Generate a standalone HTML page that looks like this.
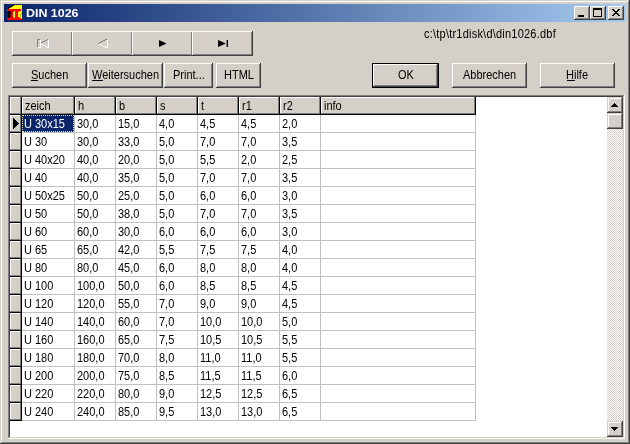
<!DOCTYPE html><html><head><meta charset="utf-8"><title>DIN 1026</title><style>
html,body{margin:0;padding:0;}
body{width:630px;height:444px;overflow:hidden;background:#d4d0c8;position:relative;font-family:"Liberation Sans",sans-serif;font-size:11px;color:#000;}
.a{position:absolute;}
.win{left:0;top:0;width:630px;height:444px;background:#d4d0c8;
 box-shadow:inset -1px -1px 0 #404040,inset 1px 1px 0 #d4d0c8,inset -2px -2px 0 #808080,inset 2px 2px 0 #fff;}
.title{left:4px;top:4px;width:622px;height:18px;background:linear-gradient(to right,#0a246a 0%,#a6caf0 100%);}
.ttext{left:26px;top:4px;height:18px;line-height:18px;color:#fff;font-weight:bold;font-size:11px;white-space:nowrap;transform-origin:0 0;transform:scaleX(1.13);will-change:transform;}
.btn{background:#d4d0c8;box-shadow:inset -1px -1px 0 #404040,inset 1px 1px 0 #fff,inset -2px -2px 0 #808080,inset 2px 2px 0 #d4d0c8;}
.sb{box-shadow:inset -1px -1px 0 #404040,inset 1px 1px 0 #d4d0c8,inset -2px -2px 0 #808080,inset 2px 2px 0 #fff;}
.bt{position:absolute;left:0;right:0;top:0;bottom:0;text-align:center;white-space:nowrap;}
.tx{display:inline-block;transform-origin:0 0;transform:scaleY(1.14);will-change:transform;white-space:nowrap;line-height:13px;}
.cap{width:16px;height:14px;top:6px;}
.grid{left:8px;top:95px;width:617px;height:344px;background:#fff;
 box-shadow:inset -1px -1px 0 #fff,inset 1px 1px 0 #808080,inset -2px -2px 0 #d4d0c8,inset 2px 2px 0 #404040;}
.hc{background:#d4d0c8;box-shadow:inset -1px -1px 0 #808080,inset 1px 1px 0 #fff;}
.bl{background:#000;}
.gl{background:#c0c0c0;}
.ct{white-space:nowrap;}
u{text-decoration:none;}
.track{background-image:repeating-conic-gradient(#fff 0 25%,#d4d0c8 0 50%);background-size:2px 2px;}
</style></head><body>
<div class="a win"></div>
<div class="a title"></div>
<svg class="a" style="left:0;top:0" width="30" height="24" viewBox="0 0 30 24" shape-rendering="crispEdges">
<polygon points="14,5 22,5 22,20 8,20 8,9" fill="#ffff00"/>
<path d="M8 8.5L14.5 4.5" stroke="#000" stroke-width="1.2" shape-rendering="auto" fill="none"/>
<path d="M21.5 12.5L19.5 18" stroke="#a0a020" stroke-width="1" shape-rendering="auto" fill="none"/>
<rect x="8" y="11" width="2" height="7" fill="#000"/>
<rect x="10" y="11" width="1" height="7" fill="#500000"/>
<rect x="15" y="11" width="1" height="7" fill="#705000"/>
<rect x="7" y="9" width="14" height="2" fill="#ff0000"/>
<rect x="7" y="18" width="14" height="2" fill="#ff0000"/>
<rect x="11" y="11" width="2" height="7" fill="#ff0000"/>
<rect x="16" y="11" width="2" height="7" fill="#ff0000"/>
<rect x="13" y="11" width="1" height="1" fill="#ff0000"/><rect x="13" y="17" width="1" height="1" fill="#ff0000"/>
<rect x="18" y="11" width="1" height="1" fill="#ff0000"/><rect x="18" y="17" width="1" height="1" fill="#ff0000"/>
<rect x="10" y="17" width="1" height="1" fill="#ff0000"/><rect x="15" y="17" width="1" height="1" fill="#ff0000"/>
<rect x="21" y="19" width="1" height="1" fill="#303000"/>
</svg>
<div class="a ttext">DIN 1026</div>
<div class="a btn cap" style="left:574px"><div class="a" style="left:4px;top:9px;width:6px;height:2px;background:#000"></div></div>
<div class="a btn cap" style="left:590px"><div class="a" style="left:3px;top:2px;width:9px;height:9px;box-sizing:border-box;border:1px solid #000;border-top-width:2px"></div></div>
<div class="a btn cap" style="left:608px"><svg class="a" style="left:4px;top:3px" width="8" height="7" viewBox="0 0 8 7" shape-rendering="crispEdges"><path d="M0 0h2v1h1v1h2v-1h1v-1h2v1h-1v1h-1v1h-1v1h1v1h1v1h1v1h-2v-1h-1v-1h-2v1h-1v1h-2v-1h1v-1h1v-1h1v-1h-1v-1h-1v-1h-1z" fill="#000"/></svg></div>
<div class="a btn" style="left:12px;top:31px;width:61px;height:25px"></div>
<div class="a btn" style="left:72px;top:31px;width:61px;height:25px"></div>
<div class="a btn" style="left:132px;top:31px;width:61px;height:25px"></div>
<div class="a btn" style="left:192px;top:31px;width:61px;height:25px"></div>
<svg class="a" style="left:36px;top:38px" width="14" height="11" viewBox="0 0 14 11" shape-rendering="crispEdges">
<path d="M1 1h3v1h-2v7h-1z" fill="#808080"/>
<path d="M4 2h1v8h-3v-1h2z" fill="#fff"/>
<path d="M5 4h2v1h-2zM7 3h2v1h-2zM9 2h2v1h-2zM11 1h1v1h-1z" fill="#808080"/>
<path d="M5 6h2v1h-2zM7 7h2v1h-2zM9 8h2v1h-2zM11 9h2v1h-2zM12 2h1v8h-1z" fill="#fff"/>
</svg>
<svg class="a" style="left:96px;top:38px" width="14" height="11" viewBox="0 0 14 11" shape-rendering="crispEdges">
<path d="M2 5h1v1h-1zM3 4h2v1h-2zM5 3h2v1h-2zM7 2h2v1h-2zM9 1h2v1h-2z" fill="#808080"/>
<path d="M3 6h2v1h-2zM5 7h2v1h-2zM7 8h2v1h-2zM9 9h2v1h-2zM11 2h1v8h-1z" fill="#fff"/>
</svg>
<svg class="a" style="left:159px;top:40px" width="8" height="7" viewBox="0 0 8 7">
<path d="M0 0L7.6 3.5L0 7z" fill="#000"/></svg>
<svg class="a" style="left:218px;top:40px" width="10" height="7" viewBox="0 0 10 7">
<path d="M0 0L7.8 3.5L0 7z" fill="#000"/><rect x="8.6" y="0" width="1.4" height="7" fill="#000"/></svg>
<div class="a ct" style="left:424px;top:27px;letter-spacing:0.22px"><span class="tx">c:\tp\tr1disk\d\din1026.dbf</span></div>
<div class="a btn" style="left:12px;top:63px;width:75px;height:25px"><div class="bt" style="top:5px"><span class="tx"><u>S</u>uchen</span></div></div>
<div class="a btn" style="left:88px;top:63px;width:75px;height:25px"><div class="bt" style="top:5px"><span class="tx"><u>W</u>eitersuchen</span></div></div>
<div class="a btn" style="left:164px;top:63px;width:49px;height:25px"><div class="bt" style="top:5px"><span class="tx">Print...</span></div></div>
<div class="a btn" style="left:216px;top:63px;width:45px;height:25px"><div class="bt" style="top:5px"><span class="tx">HTML</span></div></div>
<div class="a" style="left:372px;top:63px;width:67px;height:25px;background:#000"></div>
<div class="a btn" style="left:373px;top:64px;width:65px;height:23px"><div class="bt" style="top:4px"><span class="tx">OK</span></div></div>
<div class="a btn" style="left:452px;top:63px;width:75px;height:25px"><div class="bt" style="top:5px"><span class="tx">Abbrechen</span></div></div>
<div class="a btn" style="left:540px;top:63px;width:75px;height:25px"><div class="bt" style="top:5px"><span class="tx"><u>H</u>ilfe</span></div></div>
<div class="a bl" style="left:31px;top:80px;width:7px;height:1px"></div>
<div class="a bl" style="left:92px;top:80px;width:11px;height:1px"></div>
<div class="a bl" style="left:567px;top:80px;width:8px;height:1px"></div>
<div class="a grid"></div>
<div class="a hc" style="left:10px;top:97px;width:11px;height:17px"></div>
<div class="a bl" style="left:21px;top:97px;width:1px;height:324px"></div>
<div class="a bl" style="left:10px;top:114px;width:466px;height:1px"></div>
<div class="a hc" style="left:22px;top:97px;width:52px;height:17px"><div class="a ct" style="left:2.5px;top:2px"><span class="tx">zeich</span></div></div>
<div class="a bl" style="left:74px;top:97px;width:1px;height:17px"></div>
<div class="a gl" style="left:74px;top:115px;width:1px;height:306px"></div>
<div class="a hc" style="left:75px;top:97px;width:40px;height:17px"><div class="a ct" style="left:2.5px;top:2px"><span class="tx">h</span></div></div>
<div class="a bl" style="left:115px;top:97px;width:1px;height:17px"></div>
<div class="a gl" style="left:115px;top:115px;width:1px;height:306px"></div>
<div class="a hc" style="left:116px;top:97px;width:40px;height:17px"><div class="a ct" style="left:2.5px;top:2px"><span class="tx">b</span></div></div>
<div class="a bl" style="left:156px;top:97px;width:1px;height:17px"></div>
<div class="a gl" style="left:156px;top:115px;width:1px;height:306px"></div>
<div class="a hc" style="left:157px;top:97px;width:40px;height:17px"><div class="a ct" style="left:2.5px;top:2px"><span class="tx">s</span></div></div>
<div class="a bl" style="left:197px;top:97px;width:1px;height:17px"></div>
<div class="a gl" style="left:197px;top:115px;width:1px;height:306px"></div>
<div class="a hc" style="left:198px;top:97px;width:40px;height:17px"><div class="a ct" style="left:2.5px;top:2px"><span class="tx">t</span></div></div>
<div class="a bl" style="left:238px;top:97px;width:1px;height:17px"></div>
<div class="a gl" style="left:238px;top:115px;width:1px;height:306px"></div>
<div class="a hc" style="left:239px;top:97px;width:40px;height:17px"><div class="a ct" style="left:2.5px;top:2px"><span class="tx">r1</span></div></div>
<div class="a bl" style="left:279px;top:97px;width:1px;height:17px"></div>
<div class="a gl" style="left:279px;top:115px;width:1px;height:306px"></div>
<div class="a hc" style="left:280px;top:97px;width:40px;height:17px"><div class="a ct" style="left:2.5px;top:2px"><span class="tx">r2</span></div></div>
<div class="a bl" style="left:320px;top:97px;width:1px;height:17px"></div>
<div class="a gl" style="left:320px;top:115px;width:1px;height:306px"></div>
<div class="a hc" style="left:321px;top:97px;width:154px;height:17px"><div class="a ct" style="left:2.5px;top:2px"><span class="tx">info</span></div></div>
<div class="a bl" style="left:475px;top:97px;width:1px;height:17px"></div>
<div class="a gl" style="left:475px;top:115px;width:1px;height:306px"></div>
<div class="a hc" style="left:10px;top:115px;width:11px;height:17px"></div>
<div class="a bl" style="left:10px;top:132px;width:12px;height:1px"></div>
<div class="a gl" style="left:22px;top:132px;width:454px;height:1px"></div>
<div class="a" style="left:22px;top:115px;width:52px;height:17px;background:#0a246a;box-sizing:border-box;border:1px dotted #f5db95"></div>
<div class="a ct" style="left:24px;top:117px;color:#fff"><span class="tx">U 30x15</span></div>
<div class="a ct" style="left:77px;top:117px"><span class="tx">30,0</span></div>
<div class="a ct" style="left:118px;top:117px"><span class="tx">15,0</span></div>
<div class="a ct" style="left:159px;top:117px"><span class="tx">4,0</span></div>
<div class="a ct" style="left:200px;top:117px"><span class="tx">4,5</span></div>
<div class="a ct" style="left:241px;top:117px"><span class="tx">4,5</span></div>
<div class="a ct" style="left:282px;top:117px"><span class="tx">2,0</span></div>
<div class="a hc" style="left:10px;top:133px;width:11px;height:17px"></div>
<div class="a bl" style="left:10px;top:150px;width:12px;height:1px"></div>
<div class="a gl" style="left:22px;top:150px;width:454px;height:1px"></div>
<div class="a ct" style="left:24px;top:135px"><span class="tx">U 30</span></div>
<div class="a ct" style="left:77px;top:135px"><span class="tx">30,0</span></div>
<div class="a ct" style="left:118px;top:135px"><span class="tx">33,0</span></div>
<div class="a ct" style="left:159px;top:135px"><span class="tx">5,0</span></div>
<div class="a ct" style="left:200px;top:135px"><span class="tx">7,0</span></div>
<div class="a ct" style="left:241px;top:135px"><span class="tx">7,0</span></div>
<div class="a ct" style="left:282px;top:135px"><span class="tx">3,5</span></div>
<div class="a hc" style="left:10px;top:151px;width:11px;height:17px"></div>
<div class="a bl" style="left:10px;top:168px;width:12px;height:1px"></div>
<div class="a gl" style="left:22px;top:168px;width:454px;height:1px"></div>
<div class="a ct" style="left:24px;top:153px"><span class="tx">U 40x20</span></div>
<div class="a ct" style="left:77px;top:153px"><span class="tx">40,0</span></div>
<div class="a ct" style="left:118px;top:153px"><span class="tx">20,0</span></div>
<div class="a ct" style="left:159px;top:153px"><span class="tx">5,0</span></div>
<div class="a ct" style="left:200px;top:153px"><span class="tx">5,5</span></div>
<div class="a ct" style="left:241px;top:153px"><span class="tx">2,0</span></div>
<div class="a ct" style="left:282px;top:153px"><span class="tx">2,5</span></div>
<div class="a hc" style="left:10px;top:169px;width:11px;height:17px"></div>
<div class="a bl" style="left:10px;top:186px;width:12px;height:1px"></div>
<div class="a gl" style="left:22px;top:186px;width:454px;height:1px"></div>
<div class="a ct" style="left:24px;top:171px"><span class="tx">U 40</span></div>
<div class="a ct" style="left:77px;top:171px"><span class="tx">40,0</span></div>
<div class="a ct" style="left:118px;top:171px"><span class="tx">35,0</span></div>
<div class="a ct" style="left:159px;top:171px"><span class="tx">5,0</span></div>
<div class="a ct" style="left:200px;top:171px"><span class="tx">7,0</span></div>
<div class="a ct" style="left:241px;top:171px"><span class="tx">7,0</span></div>
<div class="a ct" style="left:282px;top:171px"><span class="tx">3,5</span></div>
<div class="a hc" style="left:10px;top:187px;width:11px;height:17px"></div>
<div class="a bl" style="left:10px;top:204px;width:12px;height:1px"></div>
<div class="a gl" style="left:22px;top:204px;width:454px;height:1px"></div>
<div class="a ct" style="left:24px;top:189px"><span class="tx">U 50x25</span></div>
<div class="a ct" style="left:77px;top:189px"><span class="tx">50,0</span></div>
<div class="a ct" style="left:118px;top:189px"><span class="tx">25,0</span></div>
<div class="a ct" style="left:159px;top:189px"><span class="tx">5,0</span></div>
<div class="a ct" style="left:200px;top:189px"><span class="tx">6,0</span></div>
<div class="a ct" style="left:241px;top:189px"><span class="tx">6,0</span></div>
<div class="a ct" style="left:282px;top:189px"><span class="tx">3,0</span></div>
<div class="a hc" style="left:10px;top:205px;width:11px;height:17px"></div>
<div class="a bl" style="left:10px;top:222px;width:12px;height:1px"></div>
<div class="a gl" style="left:22px;top:222px;width:454px;height:1px"></div>
<div class="a ct" style="left:24px;top:207px"><span class="tx">U 50</span></div>
<div class="a ct" style="left:77px;top:207px"><span class="tx">50,0</span></div>
<div class="a ct" style="left:118px;top:207px"><span class="tx">38,0</span></div>
<div class="a ct" style="left:159px;top:207px"><span class="tx">5,0</span></div>
<div class="a ct" style="left:200px;top:207px"><span class="tx">7,0</span></div>
<div class="a ct" style="left:241px;top:207px"><span class="tx">7,0</span></div>
<div class="a ct" style="left:282px;top:207px"><span class="tx">3,5</span></div>
<div class="a hc" style="left:10px;top:223px;width:11px;height:17px"></div>
<div class="a bl" style="left:10px;top:240px;width:12px;height:1px"></div>
<div class="a gl" style="left:22px;top:240px;width:454px;height:1px"></div>
<div class="a ct" style="left:24px;top:225px"><span class="tx">U 60</span></div>
<div class="a ct" style="left:77px;top:225px"><span class="tx">60,0</span></div>
<div class="a ct" style="left:118px;top:225px"><span class="tx">30,0</span></div>
<div class="a ct" style="left:159px;top:225px"><span class="tx">6,0</span></div>
<div class="a ct" style="left:200px;top:225px"><span class="tx">6,0</span></div>
<div class="a ct" style="left:241px;top:225px"><span class="tx">6,0</span></div>
<div class="a ct" style="left:282px;top:225px"><span class="tx">3,0</span></div>
<div class="a hc" style="left:10px;top:241px;width:11px;height:17px"></div>
<div class="a bl" style="left:10px;top:258px;width:12px;height:1px"></div>
<div class="a gl" style="left:22px;top:258px;width:454px;height:1px"></div>
<div class="a ct" style="left:24px;top:243px"><span class="tx">U 65</span></div>
<div class="a ct" style="left:77px;top:243px"><span class="tx">65,0</span></div>
<div class="a ct" style="left:118px;top:243px"><span class="tx">42,0</span></div>
<div class="a ct" style="left:159px;top:243px"><span class="tx">5,5</span></div>
<div class="a ct" style="left:200px;top:243px"><span class="tx">7,5</span></div>
<div class="a ct" style="left:241px;top:243px"><span class="tx">7,5</span></div>
<div class="a ct" style="left:282px;top:243px"><span class="tx">4,0</span></div>
<div class="a hc" style="left:10px;top:259px;width:11px;height:17px"></div>
<div class="a bl" style="left:10px;top:276px;width:12px;height:1px"></div>
<div class="a gl" style="left:22px;top:276px;width:454px;height:1px"></div>
<div class="a ct" style="left:24px;top:261px"><span class="tx">U 80</span></div>
<div class="a ct" style="left:77px;top:261px"><span class="tx">80,0</span></div>
<div class="a ct" style="left:118px;top:261px"><span class="tx">45,0</span></div>
<div class="a ct" style="left:159px;top:261px"><span class="tx">6,0</span></div>
<div class="a ct" style="left:200px;top:261px"><span class="tx">8,0</span></div>
<div class="a ct" style="left:241px;top:261px"><span class="tx">8,0</span></div>
<div class="a ct" style="left:282px;top:261px"><span class="tx">4,0</span></div>
<div class="a hc" style="left:10px;top:277px;width:11px;height:17px"></div>
<div class="a bl" style="left:10px;top:294px;width:12px;height:1px"></div>
<div class="a gl" style="left:22px;top:294px;width:454px;height:1px"></div>
<div class="a ct" style="left:24px;top:279px"><span class="tx">U 100</span></div>
<div class="a ct" style="left:77px;top:279px"><span class="tx">100,0</span></div>
<div class="a ct" style="left:118px;top:279px"><span class="tx">50,0</span></div>
<div class="a ct" style="left:159px;top:279px"><span class="tx">6,0</span></div>
<div class="a ct" style="left:200px;top:279px"><span class="tx">8,5</span></div>
<div class="a ct" style="left:241px;top:279px"><span class="tx">8,5</span></div>
<div class="a ct" style="left:282px;top:279px"><span class="tx">4,5</span></div>
<div class="a hc" style="left:10px;top:295px;width:11px;height:17px"></div>
<div class="a bl" style="left:10px;top:312px;width:12px;height:1px"></div>
<div class="a gl" style="left:22px;top:312px;width:454px;height:1px"></div>
<div class="a ct" style="left:24px;top:297px"><span class="tx">U 120</span></div>
<div class="a ct" style="left:77px;top:297px"><span class="tx">120,0</span></div>
<div class="a ct" style="left:118px;top:297px"><span class="tx">55,0</span></div>
<div class="a ct" style="left:159px;top:297px"><span class="tx">7,0</span></div>
<div class="a ct" style="left:200px;top:297px"><span class="tx">9,0</span></div>
<div class="a ct" style="left:241px;top:297px"><span class="tx">9,0</span></div>
<div class="a ct" style="left:282px;top:297px"><span class="tx">4,5</span></div>
<div class="a hc" style="left:10px;top:313px;width:11px;height:17px"></div>
<div class="a bl" style="left:10px;top:330px;width:12px;height:1px"></div>
<div class="a gl" style="left:22px;top:330px;width:454px;height:1px"></div>
<div class="a ct" style="left:24px;top:315px"><span class="tx">U 140</span></div>
<div class="a ct" style="left:77px;top:315px"><span class="tx">140,0</span></div>
<div class="a ct" style="left:118px;top:315px"><span class="tx">60,0</span></div>
<div class="a ct" style="left:159px;top:315px"><span class="tx">7,0</span></div>
<div class="a ct" style="left:200px;top:315px"><span class="tx">10,0</span></div>
<div class="a ct" style="left:241px;top:315px"><span class="tx">10,0</span></div>
<div class="a ct" style="left:282px;top:315px"><span class="tx">5,0</span></div>
<div class="a hc" style="left:10px;top:331px;width:11px;height:17px"></div>
<div class="a bl" style="left:10px;top:348px;width:12px;height:1px"></div>
<div class="a gl" style="left:22px;top:348px;width:454px;height:1px"></div>
<div class="a ct" style="left:24px;top:333px"><span class="tx">U 160</span></div>
<div class="a ct" style="left:77px;top:333px"><span class="tx">160,0</span></div>
<div class="a ct" style="left:118px;top:333px"><span class="tx">65,0</span></div>
<div class="a ct" style="left:159px;top:333px"><span class="tx">7,5</span></div>
<div class="a ct" style="left:200px;top:333px"><span class="tx">10,5</span></div>
<div class="a ct" style="left:241px;top:333px"><span class="tx">10,5</span></div>
<div class="a ct" style="left:282px;top:333px"><span class="tx">5,5</span></div>
<div class="a hc" style="left:10px;top:349px;width:11px;height:17px"></div>
<div class="a bl" style="left:10px;top:366px;width:12px;height:1px"></div>
<div class="a gl" style="left:22px;top:366px;width:454px;height:1px"></div>
<div class="a ct" style="left:24px;top:351px"><span class="tx">U 180</span></div>
<div class="a ct" style="left:77px;top:351px"><span class="tx">180,0</span></div>
<div class="a ct" style="left:118px;top:351px"><span class="tx">70,0</span></div>
<div class="a ct" style="left:159px;top:351px"><span class="tx">8,0</span></div>
<div class="a ct" style="left:200px;top:351px"><span class="tx">11,0</span></div>
<div class="a ct" style="left:241px;top:351px"><span class="tx">11,0</span></div>
<div class="a ct" style="left:282px;top:351px"><span class="tx">5,5</span></div>
<div class="a hc" style="left:10px;top:367px;width:11px;height:17px"></div>
<div class="a bl" style="left:10px;top:384px;width:12px;height:1px"></div>
<div class="a gl" style="left:22px;top:384px;width:454px;height:1px"></div>
<div class="a ct" style="left:24px;top:369px"><span class="tx">U 200</span></div>
<div class="a ct" style="left:77px;top:369px"><span class="tx">200,0</span></div>
<div class="a ct" style="left:118px;top:369px"><span class="tx">75,0</span></div>
<div class="a ct" style="left:159px;top:369px"><span class="tx">8,5</span></div>
<div class="a ct" style="left:200px;top:369px"><span class="tx">11,5</span></div>
<div class="a ct" style="left:241px;top:369px"><span class="tx">11,5</span></div>
<div class="a ct" style="left:282px;top:369px"><span class="tx">6,0</span></div>
<div class="a hc" style="left:10px;top:385px;width:11px;height:17px"></div>
<div class="a bl" style="left:10px;top:402px;width:12px;height:1px"></div>
<div class="a gl" style="left:22px;top:402px;width:454px;height:1px"></div>
<div class="a ct" style="left:24px;top:387px"><span class="tx">U 220</span></div>
<div class="a ct" style="left:77px;top:387px"><span class="tx">220,0</span></div>
<div class="a ct" style="left:118px;top:387px"><span class="tx">80,0</span></div>
<div class="a ct" style="left:159px;top:387px"><span class="tx">9,0</span></div>
<div class="a ct" style="left:200px;top:387px"><span class="tx">12,5</span></div>
<div class="a ct" style="left:241px;top:387px"><span class="tx">12,5</span></div>
<div class="a ct" style="left:282px;top:387px"><span class="tx">6,5</span></div>
<div class="a hc" style="left:10px;top:403px;width:11px;height:17px"></div>
<div class="a bl" style="left:10px;top:420px;width:12px;height:1px"></div>
<div class="a gl" style="left:22px;top:420px;width:454px;height:1px"></div>
<div class="a ct" style="left:24px;top:405px"><span class="tx">U 240</span></div>
<div class="a ct" style="left:77px;top:405px"><span class="tx">240,0</span></div>
<div class="a ct" style="left:118px;top:405px"><span class="tx">85,0</span></div>
<div class="a ct" style="left:159px;top:405px"><span class="tx">9,5</span></div>
<div class="a ct" style="left:200px;top:405px"><span class="tx">13,0</span></div>
<div class="a ct" style="left:241px;top:405px"><span class="tx">13,0</span></div>
<div class="a ct" style="left:282px;top:405px"><span class="tx">6,5</span></div>
<svg class="a" style="left:13px;top:118px" width="6" height="11" viewBox="0 0 6 11" shape-rendering="crispEdges">
<path d="M0 0h1v1h1v1h1v1h1v1h1v1h1v1h-1v1h-1v1h-1v1h-1v1h-1v1h-1z" fill="#000"/></svg>
<div class="a track" style="left:607px;top:97px;width:16px;height:340px"></div>
<div class="a btn sb" style="left:607px;top:97px;width:16px;height:16px"><svg class="a" style="left:4px;top:6px" width="7" height="4" viewBox="0 0 7 4" shape-rendering="crispEdges"><path d="M3 0h1v1h1v1h1v1h1v1h-7v-1h1v-1h1v-1h1z" fill="#000"/></svg></div>
<div class="a btn sb" style="left:607px;top:113px;width:16px;height:16px"></div>
<div class="a btn sb" style="left:607px;top:421px;width:16px;height:16px"><svg class="a" style="left:4px;top:6px" width="7" height="4" viewBox="0 0 7 4" shape-rendering="crispEdges"><path d="M0 0h7v1h-1v1h-1v1h-1v1h-1v-1h-1v-1h-1v-1h-1z" fill="#000"/></svg></div>
</body></html>
